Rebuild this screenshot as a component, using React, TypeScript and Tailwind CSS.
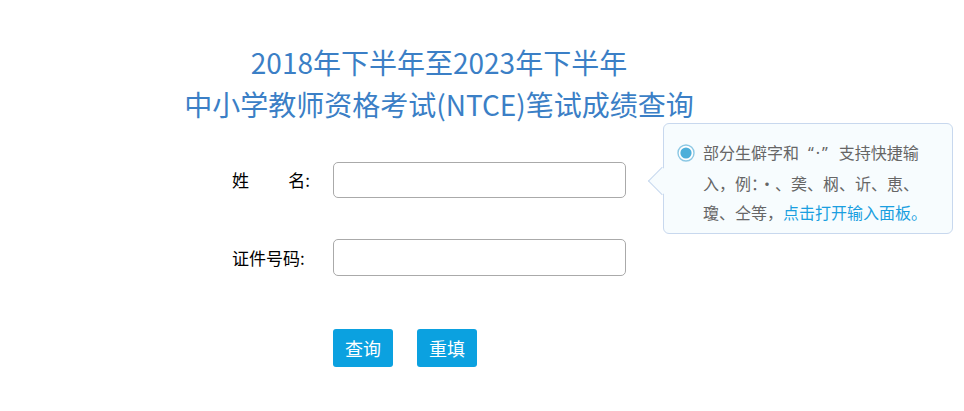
import { useState } from "react";

const FONT = { fontFamily: '"Noto Sans CJK SC", "Noto Sans", sans-serif' };

export default function App() {
  const [name, setName] = useState("");
  const [idNo, setIdNo] = useState("");

  return (
    <div className="min-h-[411px] w-[964px] bg-white" style={FONT}>
      <div className="w-[878px] pt-[41px] text-center text-[28px] leading-[42px] text-[#3b7fc6]">
        <div>2018年下半年至2023年下半年</div>
        <div>中小学教师资格考试(NTCE)笔试成绩查询</div>
      </div>

      <form className="ml-[232px] mt-[37px] flex flex-col" onSubmit={(e) => e.preventDefault()}>
        <div className="relative flex items-center">
          <label className="flex w-[78px] justify-between text-[17px] text-black">
            <span>姓</span>
            <span>名:</span>
          </label>
          <input
            className="ml-[23px] h-[36px] w-[293px] rounded-[5px] border border-[#aaaaaa] bg-white px-2 text-[16px] outline-none"
            value={name}
            onChange={(e) => setName(e.target.value)}
          />
          <Tip />
        </div>

        <div className="mt-[41px] flex items-center">
          <label className="w-[78px] text-[17px] text-black">证件号码:</label>
          <input
            className="ml-[23px] h-[37px] w-[293px] rounded-[5px] border border-[#aaaaaa] bg-white px-2 text-[16px] outline-none"
            value={idNo}
            onChange={(e) => setIdNo(e.target.value)}
          />
        </div>

        <div className="ml-[101px] mt-[53px] flex gap-[24px]">
          <button
            type="submit"
            className="h-[38px] w-[60px] rounded-[3px] bg-[#0ba1e0] text-[18px] text-white"
          >
            查询
          </button>
          <button
            type="button"
            className="h-[38px] w-[60px] rounded-[3px] bg-[#0ba1e0] text-[18px] text-white"
            onClick={() => {
              setName("");
              setIdNo("");
            }}
          >
            重填
          </button>
        </div>
      </form>
    </div>
  );
}

function Tip() {
  return (
    <div className="absolute left-[431px] top-[-39px] w-[290px] rounded-[6px] border border-[#c8d8ee] bg-[#f7fcfe] pb-[5px] pl-[13px] pt-[14px]">
      <div className="absolute left-[-12px] top-[47px] h-[20px] w-[20px] rotate-45 border-b border-l border-[#c8d8ee] bg-[#f7fcfe]" />
      <div className="relative flex gap-[8px]">
        <svg width="18" height="18" viewBox="0 0 18 18" className="mt-[6px] shrink-0">
          <circle cx="9" cy="9" r="8" fill="#fff" stroke="#8cc8e4" strokeWidth="1.4" />
          <circle cx="9" cy="9" r="5.6" fill="#4dafda" />
        </svg>
        <p className="text-[16px] leading-[29.5px] text-[#666]">
          部分生僻字和
          <span className="px-[9px] tracking-[2px]" style={{ fontFamily: '"Noto Sans", sans-serif' }}>
            “·”
          </span>
          支持快捷输
          <br />
          入，例：·、䶮、㭎、䜣、恵、
          <br />
          瓊、仝等，<span className="cursor-pointer text-[#1a9fe0]">点击打开输入面板。</span>
        </p>
      </div>
    </div>
  );
}
